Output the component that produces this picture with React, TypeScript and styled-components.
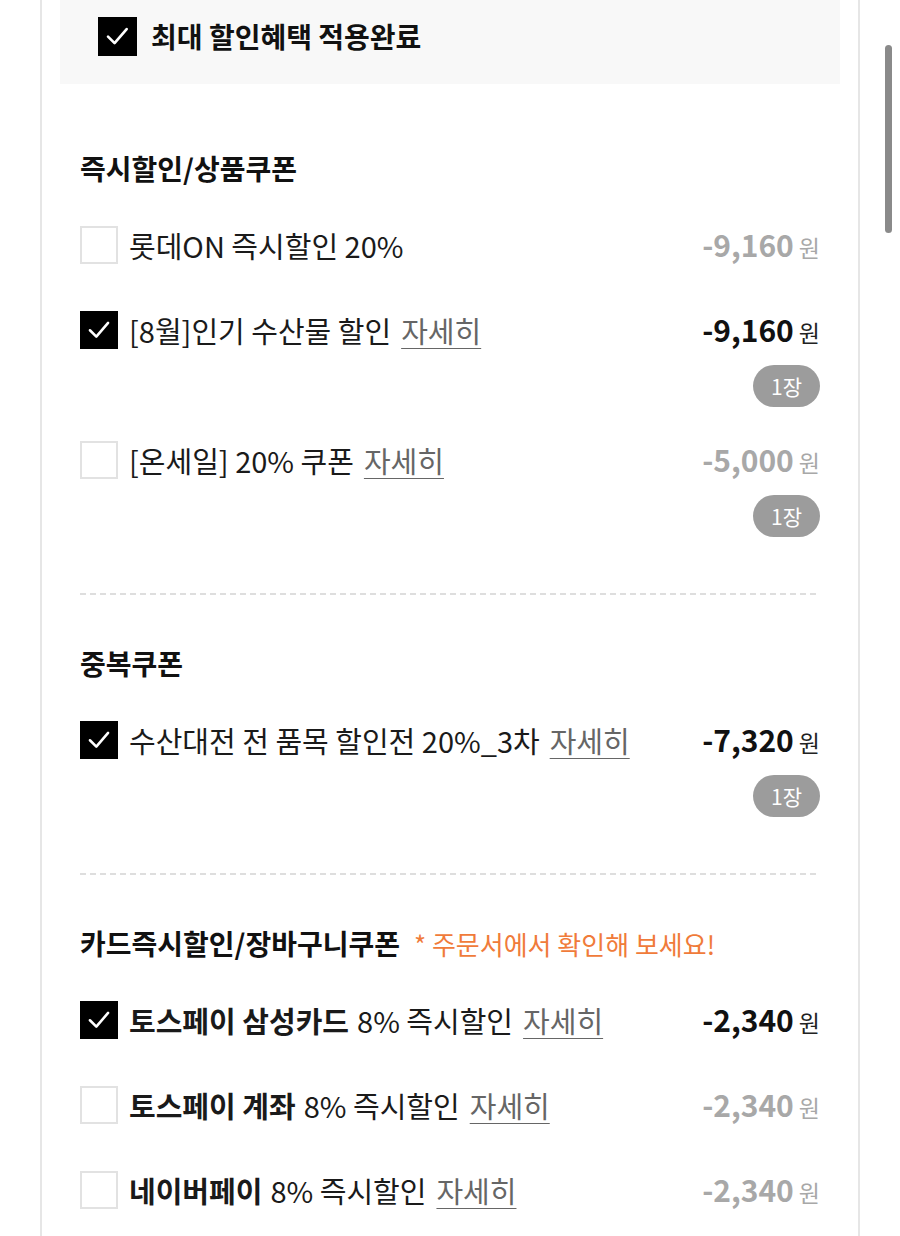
import styled, { createGlobalStyle } from 'styled-components';

const GlobalStyle = createGlobalStyle`
    body {
        margin: 0;
        background: #fff;
        font-family: "Noto Sans CJK KR", "Noto Sans", sans-serif;
        color: #111;
    }
`;

interface CouponItem {
    strong?: string;
    label: string;
    amount: string;
    checked: boolean;
    detail?: boolean;
    count?: number;
}

interface CouponGroup {
    title: string;
    note?: string;
    items: CouponItem[];
}

const groups: CouponGroup[] = [
    {
        title: '즉시할인/상품쿠폰',
        items: [
            { label: '롯데ON 즉시할인 20%', amount: '-9,160', checked: false },
            { label: '[8월]인기 수산물 할인', amount: '-9,160', checked: true, detail: true, count: 1 },
            { label: '[온세일] 20% 쿠폰', amount: '-5,000', checked: false, detail: true, count: 1 },
        ],
    },
    {
        title: '중복쿠폰',
        items: [
            { label: '수산대전 전 품목 할인전 20%_3차', amount: '-7,320', checked: true, detail: true, count: 1 },
        ],
    },
    {
        title: '카드즉시할인/장바구니쿠폰',
        note: '* 주문서에서 확인해 보세요!',
        items: [
            { strong: '토스페이 삼성카드', label: '8% 즉시할인', amount: '-2,340', checked: true, detail: true },
            { strong: '토스페이 계좌', label: '8% 즉시할인', amount: '-2,340', checked: false, detail: true },
            { strong: '네이버페이', label: '8% 즉시할인', amount: '-2,340', checked: false, detail: true },
        ],
    },
];

const Page = styled.div`
    position: relative;
    width: 900px;
    height: 1236px;
    overflow: hidden;
`;

const Panel = styled.div`
    margin-left: 40px;
    width: 780px;
    min-height: 1236px;
    padding: 0 18px;
    border-left: 2px solid #e6e6e6;
    border-right: 2px solid #e6e6e6;
`;

const Scrollbar = styled.div`
    position: absolute;
    top: 45px;
    left: 885px;
    width: 7px;
    height: 188px;
    border-radius: 4px;
    background: #8a8a8a;
`;

const BestBox = styled.div`
    display: flex;
    align-items: center;
    gap: 14px;
    height: 72px;
    padding: 0 0 12px 38px;
    background: #f8f8f8;
    font-size: 28px;
    font-weight: 700;
`;

const Box = styled.span<{ $on: boolean; $size: number }>`
    flex: none;
    display: flex;
    align-items: center;
    justify-content: center;
    width: ${({ $size }) => $size}px;
    height: ${({ $size }) => $size}px;
    box-sizing: border-box;
    background: ${({ $on }) => ($on ? '#000' : '#fff')};
    border: ${({ $on }) => ($on ? 'none' : '2px solid #e2e2e2')};
`;

const Section = styled.section<{ $first: boolean }>`
    padding: ${({ $first }) => ($first ? 66 : 50)}px 20px 46px;
`;

const TitleRow = styled.div`
    display: flex;
    align-items: baseline;
    gap: 14px;
    height: 36px;
    line-height: 36px;
    margin-bottom: 16px;
`;

const Title = styled.h2`
    margin: 0;
    font-size: 28px;
    font-weight: 700;
`;

const Note = styled.span`
    font-size: 26px;
    color: #f07b3a;
`;

const Row = styled.div<{ $badge: boolean }>`
    display: flex;
    align-items: flex-start;
    justify-content: space-between;
    padding: 22px 0 ${({ $badge }) => ($badge ? 10 : 22)}px;
`;

const Left = styled.div`
    display: flex;
    align-items: center;
    gap: 11px;
    height: 41px;
`;

const Label = styled.span`
    font-size: 29px;
    color: #1a1a1a;
    white-space: nowrap;

    b {
        font-weight: 700;
        margin-right: 8px;
    }
`;

const Detail = styled.a`
    margin-left: 10px;
    color: #666;
    text-decoration: underline;
    text-underline-offset: 5px;
    text-decoration-thickness: 1px;
    cursor: pointer;
`;

const Right = styled.div`
    display: flex;
    flex-direction: column;
    align-items: flex-end;
`;

const Price = styled.div<{ $on: boolean }>`
    display: flex;
    align-items: baseline;
    gap: 5px;
    height: 41px;
    line-height: 41px;
    color: ${({ $on }) => ($on ? '#111' : '#a8a8a8')};

    strong {
        font-size: 30px;
        font-weight: 700;
    }

    span {
        font-size: 23px;
        color: ${({ $on }) => ($on ? '#222' : '#a8a8a8')};
    }
`;

const Badge = styled.span`
    margin-top: 15px;
    display: flex;
    align-items: center;
    justify-content: center;
    width: 67px;
    height: 42px;
    border-radius: 21px;
    background: #9c9c9c;
    color: #fff;
    font-size: 21px;
`;

const Divider = styled.hr`
    margin: 0 20px;
    height: 2px;
    border: none;
    background: repeating-linear-gradient(to right, #dedede 0 6px, transparent 6px 10px);
`;

function CheckBox({ on, size }: { on: boolean; size: number }) {
    return (
        <Box $on={on} $size={size}>
            {on && (
                <svg width={size * 0.62} height={size * 0.62} viewBox="0 0 24 24" fill="none">
                    <path d="M3 12.5 9.5 19 21.5 5" stroke="#fff" strokeWidth="2.6" strokeLinecap="round" strokeLinejoin="round" />
                </svg>
            )}
        </Box>
    );
}

function CouponRow({ item }: { item: CouponItem }) {
    return (
        <Row $badge={!!item.count}>
            <Left>
                <CheckBox on={item.checked} size={38} />
                <Label>
                    {item.strong && <b>{item.strong}</b>}
                    {item.label}
                    {item.detail && <Detail>자세히</Detail>}
                </Label>
            </Left>
            <Right>
                <Price $on={item.checked}>
                    <strong>{item.amount}</strong>
                    <span>원</span>
                </Price>
                {item.count && <Badge>{item.count}장</Badge>}
            </Right>
        </Row>
    );
}

export default function App() {
    return (
        <Page>
            <GlobalStyle />
            <Panel>
                <BestBox>
                    <CheckBox on size={39} />
                    최대 할인혜택 적용완료
                </BestBox>
                {groups.map((group, i) => (
                    <div key={group.title}>
                        {i > 0 && <Divider />}
                        <Section $first={i === 0}>
                            <TitleRow>
                                <Title>{group.title}</Title>
                                {group.note && <Note>{group.note}</Note>}
                            </TitleRow>
                            {group.items.map((item) => (
                                <CouponRow key={item.label + (item.strong ?? '')} item={item} />
                            ))}
                        </Section>
                    </div>
                ))}
            </Panel>
            <Scrollbar />
        </Page>
    );
}
